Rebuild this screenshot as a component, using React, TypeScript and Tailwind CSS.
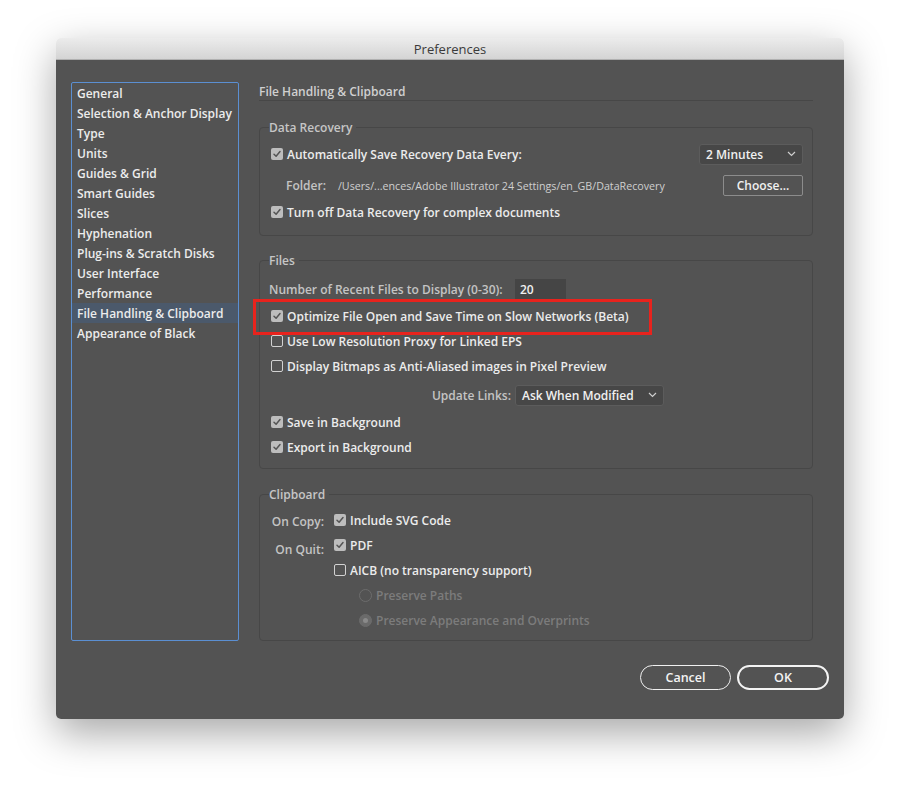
import React from "react";

const FONT = { fontFamily: '"Open Sans", "Noto Sans", sans-serif' };

function Check({ checked }: { checked?: boolean }) {
  if (checked) {
    return (
      <span className="ml-[2px] w-3 h-3 shrink-0 rounded-[2px] bg-[#bdbdbd] flex items-center justify-center">
        <svg width="10" height="10" viewBox="0 0 10 10">
          <path d="M2 5.2 L4.1 7.3 L8 2.6" fill="none" stroke="#555" strokeWidth="1.5" strokeLinecap="round" strokeLinejoin="round" />
        </svg>
      </span>
    );
  }
  return <span className="ml-[2px] w-3 h-3 shrink-0 rounded-[2px] border border-[#d2d2d2]" />;
}

function CheckRow({ checked, label, className = "" }: { checked?: boolean; label: string; className?: string }) {
  return (
    <div className={"h-5 flex items-center " + className}>
      <Check checked={checked} />
      <span className="ml-1 pt-[1px] text-[#ececec] whitespace-nowrap">{label}</span>
    </div>
  );
}

function Chevron() {
  return (
    <svg width="9" height="6" viewBox="0 0 9 6">
      <path d="M1 1 L4.5 4.5 L8 1" fill="none" stroke="#cfcfcf" strokeWidth="1.2" />
    </svg>
  );
}

function Group({ title, className = "", children }: { title: string; className?: string; children: React.ReactNode }) {
  return (
    <fieldset className={"border border-[#474747] rounded-[4px] pl-[9px] pr-[9px] " + className}>
      <legend className="h-4 leading-4 pt-[1px] text-[#c6c6c6] pr-1">{title}</legend>
      {children}
    </fieldset>
  );
}

const items = [
  "General",
  "Selection & Anchor Display",
  "Type",
  "Units",
  "Guides & Grid",
  "Smart Guides",
  "Slices",
  "Hyphenation",
  "Plug-ins & Scratch Disks",
  "User Interface",
  "Performance",
  "File Handling & Clipboard",
  "Appearance of Black",
];

export default function App() {
  return (
    <div className="w-[900px] h-[794px] bg-white pt-[38px] pl-[56px] text-[12px] font-semibold" style={FONT}>
      <div className="w-[788px] h-[681px] rounded-[5px] shadow-[0_14px_40px_rgba(0,0,0,0.35)] overflow-hidden flex flex-col">
        <div className="h-[22px] shrink-0 bg-linear-to-b from-[#ececec] to-[#d4d4d4] border-b border-[#b0b0b0] flex items-center justify-center pt-[2px] text-[13px] font-normal text-[#3a3a3a]">
          Preferences
        </div>
        <div className="flex-1 bg-[#535353] pt-[22px] px-[15px] flex flex-col">
          <div className="flex">
            <div className="w-[168px] h-[559px] shrink-0 border border-[#5b8fd2] rounded-[2px]">
              {items.map((it) => (
                <div
                  key={it}
                  className={
                    "h-5 leading-[22px] pl-[5px] text-[#ececec] whitespace-nowrap " +
                    (it === "File Handling & Clipboard" ? "bg-[#4b596b]" : "")
                  }
                >
                  {it}
                </div>
              ))}
            </div>
            <div className="ml-[20px] w-[554px]">
              <div className="h-[19px] leading-[20px] border-b border-[#474747] text-[#d0d0d0]">
                File Handling &amp; Clipboard
              </div>

              <Group title="Data Recovery" className="mt-[18px] pb-[13px]">
                <div className="mt-[8px] h-[22px] flex items-center justify-between">
                  <CheckRow checked label="Automatically Save Recovery Data Every:" />
                  <div className="w-[104px] h-[21px] rounded-[3px] bg-[#474747] border border-[#5c5c5c] flex items-center justify-between pl-[6px] pr-[6px] text-[#f0f0f0]">
                    <span className="pt-[1px]">2 Minutes</span>
                    <Chevron />
                  </div>
                </div>
                <div className="mt-[10px] h-[21px] flex items-center justify-between">
                  <div className="flex items-center pl-[17px] pt-[1px]">
                    <span className="text-[#c4c4c4]">Folder:</span>
                    <span className="ml-[12px] text-[10.7px] text-[#cfcfcf] font-normal">
                      /Users/...ences/Adobe Illustrator 24 Settings/en_GB/DataRecovery
                    </span>
                  </div>
                  <div className="w-[80px] h-[21px] rounded-[2px] border border-[#8c8c8c] flex items-center justify-center pt-[1px] text-[#f0f0f0]">
                    Choose...
                  </div>
                </div>
                <CheckRow checked label="Turn off Data Recovery for complex documents" className="mt-[6px]" />
              </Group>

              <Group title="Files" className="mt-[16px] pb-[11px]">
                <div className="mt-[11px] h-5 flex items-center">
                  <span className="w-[242px] text-[#c4c4c4] pt-[1px] whitespace-nowrap">Number of Recent Files to Display (0-30):</span>
                  <div className="ml-[4px] w-[51px] h-5 bg-[#454545] flex items-center pl-[5px] pt-[1px] text-[#f0f0f0]">20</div>
                </div>
                <div className="relative mt-[7px]">
                  <div className="absolute left-[-16px] top-[-7px] w-[399px] h-[36px] border-[3px] border-[#e8231d]" />
                  <CheckRow checked label="Optimize File Open and Save Time on Slow Networks (Beta)" />
                </div>
                <CheckRow label="Use Low Resolution Proxy for Linked EPS" className="mt-[5px]" />
                <CheckRow label="Display Bitmaps as Anti-Aliased images in Pixel Preview" className="mt-[5px]" />
                <div className="mt-[9px] h-5 flex items-center">
                  <span className="w-[242px] text-right text-[#c4c4c4] pt-[1px]">Update Links:</span>
                  <div className="ml-[4px] w-[149px] h-[21px] rounded-[3px] bg-[#474747] border border-[#5c5c5c] flex items-center justify-between pl-[6px] pr-[6px] text-[#f0f0f0]">
                    <span className="pt-[1px]">Ask When Modified</span>
                    <Chevron />
                  </div>
                </div>
                <CheckRow checked label="Save in Background" className="mt-[7px]" />
                <CheckRow checked label="Export in Background" className="mt-[5px]" />
              </Group>

              <Group title="Clipboard" className="mt-[17px] pb-[10px]">
                <div className="mt-[8px] flex items-start">
                  <div className="w-[55px] flex flex-col items-end text-[#c4c4c4]">
                    <div className="h-5 leading-5 mt-[2px]">On Copy:</div>
                    <div className="h-5 leading-5 mt-[8px]">On Quit:</div>
                  </div>
                  <div className="ml-[8px] flex flex-col gap-[5px]">
                    <CheckRow checked label="Include SVG Code" />
                    <CheckRow checked label="PDF" />
                    <CheckRow label="AICB (no transparency support)" />
                    <div className="h-5 flex items-center ml-[27px]">
                      <span className="w-[13px] h-[13px] rounded-full border border-[#6c6c6c]" />
                      <span className="ml-1 pt-[1px] text-[#7c7c7c]">Preserve Paths</span>
                    </div>
                    <div className="h-5 flex items-center ml-[27px]">
                      <span className="w-[13px] h-[13px] rounded-full border border-[#6c6c6c] bg-[#6a6a6a] flex items-center justify-center">
                        <span className="w-[5px] h-[5px] rounded-full bg-[#8a8a8a]" />
                      </span>
                      <span className="ml-1 pt-[1px] text-[#7c7c7c]">Preserve Appearance and Overprints</span>
                    </div>
                  </div>
                </div>
              </Group>
            </div>
          </div>
          <div className="mt-[24px] flex justify-end gap-[6px]">
            <div className="w-[91px] h-[25px] rounded-full border border-[#f0f0f0] flex items-center justify-center pt-[1px] text-[#f4f4f4] text-[12.5px]">
              Cancel
            </div>
            <div className="w-[92px] h-[25px] rounded-full border-2 border-[#f4f4f4] flex items-center justify-center pt-[1px] text-[#f4f4f4] text-[12.5px]">
              OK
            </div>
          </div>
        </div>
      </div>
    </div>
  );
}
